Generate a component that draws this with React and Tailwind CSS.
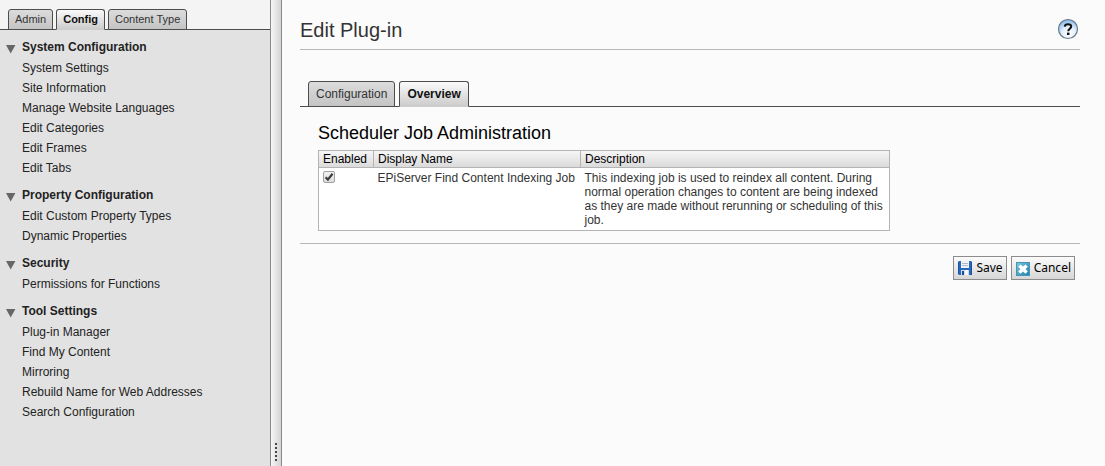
import React, { useState } from 'react'
import clsx from 'clsx'

const NAV = [
  { title: 'System Configuration', items: ['System Settings', 'Site Information', 'Manage Website Languages', 'Edit Categories', 'Edit Frames', 'Edit Tabs'] },
  { title: 'Property Configuration', items: ['Edit Custom Property Types', 'Dynamic Properties'] },
  { title: 'Security', items: ['Permissions for Functions'] },
  { title: 'Tool Settings', items: ['Plug-in Manager', 'Find My Content', 'Mirroring', 'Rebuild Name for Web Addresses', 'Search Configuration'] },
]

function Tab({ label, active, onClick, className }) {
  return (
    <button
      role="tab"
      aria-selected={active}
      onClick={onClick}
      className={clsx(
        '-mb-px rounded-t-[3px] border border-[#4d4d4d] whitespace-nowrap',
        active ? 'border-b-[#cccccc] bg-linear-to-b from-[#fbfbfb] to-[#cccccc] font-bold text-[#111111]' : 'bg-linear-to-b from-[#dcdcdc] to-[#c4c4c4] text-[#333333]',
        className
      )}
    >
      {label}
    </button>
  )
}

function NavGroup({ title, items }) {
  const [open, setOpen] = useState(true)
  return (
    <section className="mb-1.5">
      <h2 className="font-bold">
        <button onClick={() => setOpen(!open)} aria-expanded={open} className="flex h-[22px] items-center">
          <svg width="10" height="10" viewBox="0 0 10 10" className="mr-1.5 mt-1" aria-hidden="true">
            <path d="M0 1h9.4L4.7 9.5z" fill="#666" />
          </svg>
          {title}
        </button>
      </h2>
      {open && (
        <ul className="pl-4">
          {items.map(item => (
            <li key={item} className="leading-5"><a href="#">{item}</a></li>
          ))}
        </ul>
      )}
    </section>
  )
}

function HelpIcon() {
  return (
    <svg width="22" height="22" viewBox="0 0 22 22" aria-hidden="true">
      <defs>
        <radialGradient id="help" cx="0.55" cy="0.75" r="0.75">
          <stop offset="0" stopColor="#ffffff" />
          <stop offset="0.5" stopColor="#e2eefb" />
          <stop offset="1" stopColor="#7fb2ea" />
        </radialGradient>
      </defs>
      <circle cx="11" cy="11" r="9.5" fill="url(#help)" stroke="#67798c" strokeWidth="1.2" />
      <path d="M7.8 8.6C7.9 6.9 9.1 6.2 11 6.2c2 0 3.2 0.9 3.2 2.4 0 2.1-2.9 2.2-2.9 4.6" fill="none" stroke="#111" strokeWidth="2.1" />
      <rect x="10" y="14.6" width="2.5" height="2.4" fill="#111" />
    </svg>
  )
}

function SaveIcon() {
  return (
    <svg width="14" height="14" viewBox="0 0 14 14" aria-hidden="true">
      <path d="M0 1l1-1h12l1 1v13H1l-1-1z" fill="#2a68bd" />
      <path d="M0 1h1v12H0zM13 1h1v13h-1z" fill="#1c4f9c" />
      <path d="M3 0h8v7H3z" fill="#eef1f5" />
      <path d="M4 2h6v1H4zM4 4h6v1H4z" fill="#b4bac4" />
      <path d="M3 9h8v5H3z" fill="#cfdcee" />
      <path d="M4 10h2v4H4z" fill="#1b4d9a" />
      <path d="M7 9h3v5H7z" fill="#f4f7fb" />
    </svg>
  )
}

function CancelIcon() {
  return (
    <svg width="14" height="14" viewBox="0 0 14 14" className="mt-0.5" aria-hidden="true">
      <defs>
        <linearGradient id="cancel" x1="0" y1="0" x2="1" y2="1">
          <stop offset="0" stopColor="#7cc9dd" />
          <stop offset="1" stopColor="#1f7fae" />
        </linearGradient>
      </defs>
      <rect x="0.5" y="0.5" width="13" height="13" fill="url(#cancel)" stroke="#4496b4" />
      <path d="M4.5 2.4L7 4.6l2.5-2.2 2.3 2.3L9.5 7l2.3 2.4-2.3 2.3L7 9.5l-2.5 2.2-2.3-2.3L4.5 7 2.2 4.7z" fill="#fff" />
    </svg>
  )
}

function ActionButton({ icon, children }) {
  return (
    <button className="flex h-6 items-center gap-1 border border-[#8c8c8c] bg-linear-to-b from-[#fbfbfb] to-[#d6d6d6] pr-[3px] pl-1 font-['Noto_Sans',sans-serif] text-xs text-black">
      {icon}
      {children}
    </button>
  )
}

export default function App() {
  const [section, setSection] = useState('Config')
  const [tab, setTab] = useState('Overview')
  const [enabled, setEnabled] = useState(true)

  return (
    <div className="flex min-h-screen bg-[#fbfbfb] font-['Liberation_Sans',Arial,sans-serif] text-xs text-[#222222]">
      <aside className="w-[270px] shrink-0 bg-[#e2e2e2]">
        <div role="tablist" className="flex gap-[3px] border-b border-[#4d4d4d] bg-[#f4f4f4] pt-[9px] pl-2">
          {['Admin', 'Config', 'Content Type'].map(name => (
            <Tab key={name} label={name} active={section === name} onClick={() => setSection(name)} className="h-[21px] px-1.5 text-[11px]" />
          ))}
        </div>
        <nav className="px-1.5 pt-1.5">
          {NAV.map(group => <NavGroup key={group.title} {...group} />)}
        </nav>
      </aside>

      <div className="flex w-3 shrink-0 flex-col items-center justify-end gap-0.5 border-x border-[#8a8a8a] bg-linear-to-r from-[#f6f6f6] to-[#d4d4d4] pb-[5px]">
        {[0, 1, 2, 3, 4].map(n => <span key={n} className="size-0.5 bg-[#444444]" />)}
      </div>

      <main className="min-w-0 flex-1 pt-[18px] pr-[25px] pl-[18px]">
        <header className="flex h-8 items-start justify-between border-b border-[#b8b8b8]">
          <h1 className="text-xl leading-6 text-[#333333]">Edit Plug-in</h1>
          <button aria-label="Help" className="mr-px"><HelpIcon /></button>
        </header>

        <div role="tablist" className="mt-[31px] flex gap-1 border-b border-[#4d4d4d] pl-2">
          {['Configuration', 'Overview'].map(name => (
            <Tab key={name} label={name} active={tab === name} onClick={() => setTab(name)} className="h-[26px] px-[7px]" />
          ))}
        </div>

        <div className="px-[18px] pt-3.5 pb-3">
          <h2 className="mb-[5px] text-lg leading-6 text-black">Scheduler Job Administration</h2>
          <table className="w-[572px] max-w-full table-fixed border-collapse border border-[#b4b4b4] bg-white text-left">
            <thead>
              <tr className="h-[17px] bg-linear-to-b from-[#f6f6f6] to-[#d9d9d9] leading-4 text-black">
                <th className="w-[55px] border border-[#b4b4b4] px-1 font-normal">Enabled</th>
                <th className="w-[207px] border border-[#b4b4b4] px-1 font-normal">Display Name</th>
                <th className="border border-[#b4b4b4] px-1 font-normal">Description</th>
              </tr>
            </thead>
            <tbody className="align-top leading-[14px] text-[#333333]">
              <tr>
                <td className="px-1 py-[3px]">
                  <span className="grid size-3">
                    <input
                      type="checkbox"
                      aria-label="Enabled"
                      checked={enabled}
                      onChange={e => setEnabled(e.target.checked)}
                      className="col-start-1 row-start-1 size-3 appearance-none rounded-[2px] border border-[#a0a0a0] bg-linear-to-b from-[#f2f2f2] to-[#dddddd]"
                    />
                    {enabled && (
                      <svg viewBox="0 0 12 12" className="pointer-events-none col-start-1 row-start-1 size-3" aria-hidden="true">
                        <path d="M2.6 6.2l2.3 2.4 4.6-5.8" fill="none" stroke="#3c3c3c" strokeWidth="2.2" />
                      </svg>
                    )}
                  </span>
                </td>
                <td className="px-1 py-[3px] whitespace-nowrap">EPiServer Find Content Indexing Job</td>
                <td className="px-1 py-[3px]">
                  This indexing job is used to reindex all content. During normal operation changes to content are being indexed as they are made without rerunning or scheduling of this job.
                </td>
              </tr>
            </tbody>
          </table>
        </div>

        <div className="flex justify-end gap-1 border-t border-[#b8b8b8] pt-3 pr-[5px]">
          <ActionButton icon={<SaveIcon />}>Save</ActionButton>
          <ActionButton icon={<CancelIcon />}>Cancel</ActionButton>
        </div>
      </main>
    </div>
  )
}
